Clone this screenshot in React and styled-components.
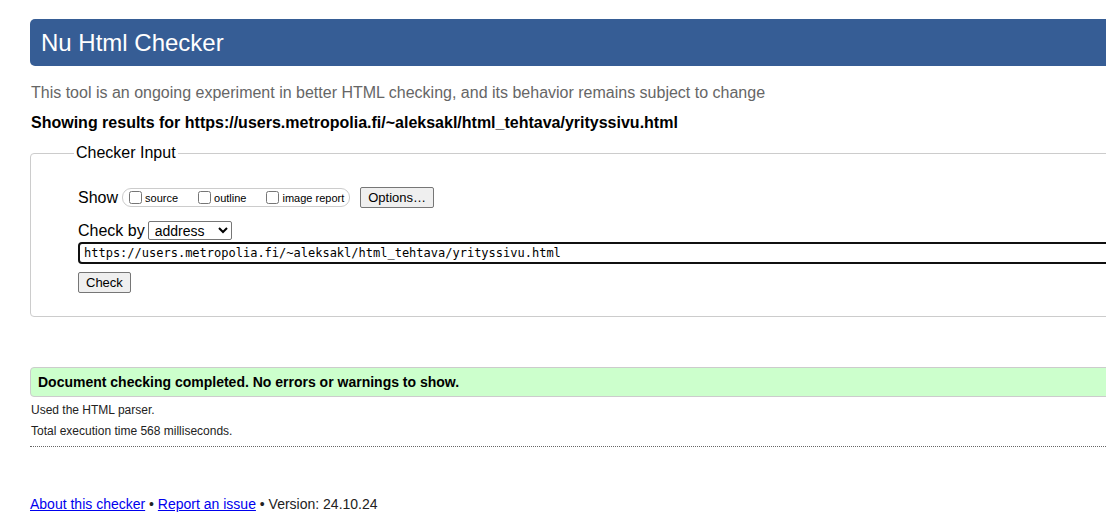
import styled, { createGlobalStyle } from 'styled-components';

const GlobalStyle = createGlobalStyle`
  html, body {
    margin: 0;
    padding: 0;
    overflow: hidden;
    background: #fff;
  }
  body {
    font-family: "Liberation Sans", Arial, sans-serif;
    color: #000;
  }
`;

const Page = styled.div`
  width: 1180px;
  padding: 19px 0 0 30px;
  display: flex;
  flex-direction: column;
`;

const Header = styled.h1`
  margin: 0;
  height: 47px;
  padding-left: 11px;
  background: #365d95;
  border-radius: 5px;
  color: #fff;
  font-size: 24px;
  font-weight: normal;
  line-height: 47px;
`;

const Intro = styled.p`
  margin: 18px 0 0 1px;
  font-size: 16px;
  line-height: 18px;
  color: #666;
`;

const ResultsFor = styled.p`
  margin: 12px 0 0 1px;
  font-size: 16px;
  line-height: 18px;
  font-weight: bold;
`;

const Fieldset = styled.fieldset`
  margin: 12px 0 0;
  padding: 0;
  border: 1px solid #ccc;
  border-radius: 4px;
  min-width: 0;
`;

const Legend = styled.legend`
  margin-left: 43px;
  padding: 0 2px;
  font-size: 16px;
  line-height: 18px;
`;

const FieldBody = styled.div`
  padding: 25px 30px 23px 47px;
  display: flex;
  flex-direction: column;
  align-items: flex-start;
`;

const Row = styled.div`
  display: flex;
  align-items: center;
  margin-top: ${(p) => p.$top || 0}px;
`;

const RowLabel = styled.span`
  font-size: 16px;
  line-height: 18px;
  margin-right: ${(p) => p.$gap || 4}px;
`;

const Pill = styled.span`
  display: inline-block;
  height: 17px;
  padding: 0 5px 0 2px;
  border: 1px solid #ccc;
  border-radius: 9px;
  font-size: 11px;
  line-height: 18px;
  white-space: nowrap;
`;

const CheckItem = styled.label`
  margin-right: ${(p) => (p.$last ? 0 : 16)}px;

  input {
    width: 13px;
    height: 13px;
    margin: 0 3px 0 4px;
    vertical-align: -2px;
  }
`;

const Button = styled.button`
  height: 21px;
  padding: 0 7px;
  margin-left: ${(p) => p.$left || 0}px;
  margin-top: ${(p) => p.$top || 0}px;
  font-family: "Liberation Sans", Arial, sans-serif;
  font-size: 13px;
  background: #efefef;
  border: 1px solid #767676;
  border-radius: 2px;
  color: #000;
`;

const Select = styled.select`
  width: 84px;
  height: 19px;
  padding: 0 0 0 2px;
  font-family: "Liberation Sans", Arial, sans-serif;
  font-size: 14px;
  border: 1px solid #767676;
  border-radius: 2px;
  background: #fff;
  color: #000;
`;

const UrlInput = styled.input`
  box-sizing: border-box;
  width: 100%;
  height: 22px;
  margin-top: 2px;
  padding: 0 4px;
  border: 2px solid #101010;
  border-radius: 4px;
  font-family: "DejaVu Sans Mono", "Liberation Mono", monospace;
  font-size: 12px;
  color: #000;
  outline: none;
`;

const Success = styled.div`
  margin-top: 50px;
  height: 28px;
  padding-left: 7px;
  background: #ccffcc;
  border: 1px solid #ccc;
  border-radius: 4px;
  font-size: 14px;
  font-weight: bold;
  line-height: 28px;
`;

const Note = styled.p`
  margin: ${(p) => p.$top}px 0 0 1px;
  font-size: 12px;
  line-height: 14px;
  color: #222;
`;

const Divider = styled.hr`
  margin: 8px 0 0;
  border: none;
  border-top: 1px dotted #666;
  height: 0;
`;

const Footer = styled.p`
  margin: 49px 0 0;
  font-size: 14px;
  line-height: 16px;
  color: #222;

  a {
    color: #0000ee;
    text-decoration: underline;
  }
`;

export default function App() {
  return (
    <>
      <GlobalStyle />
      <Page>
        <Header>Nu Html Checker</Header>
        <Intro>
          This tool is an ongoing experiment in better HTML checking, and its behavior remains subject to change
        </Intro>
        <ResultsFor>
          Showing results for https://users.metropolia.fi/~aleksakl/html_tehtava/yrityssivu.html
        </ResultsFor>
        <Fieldset>
          <Legend>Checker Input</Legend>
          <FieldBody>
            <Row>
              <RowLabel $gap={4}>Show</RowLabel>
              <Pill>
                <CheckItem>
                  <input type="checkbox" />source
                </CheckItem>
                <CheckItem>
                  <input type="checkbox" />outline
                </CheckItem>
                <CheckItem $last>
                  <input type="checkbox" />image report
                </CheckItem>
              </Pill>
              <Button $left={10}>Options…</Button>
            </Row>
            <Row $top={13}>
              <RowLabel $gap={3}>Check by</RowLabel>
              <Select defaultValue="address">
                <option value="address">address</option>
                <option value="file">file upload</option>
                <option value="text">text input</option>
              </Select>
            </Row>
            <UrlInput
              type="url"
              defaultValue="https://users.metropolia.fi/~aleksakl/html_tehtava/yrityssivu.html"
            />
            <Button $top={8}>Check</Button>
          </FieldBody>
        </Fieldset>
        <Success>Document checking completed. No errors or warnings to show.</Success>
        <Note $top={6}>Used the HTML parser.</Note>
        <Note $top={7}>Total execution time 568 milliseconds.</Note>
        <Divider />
        <Footer>
          <a href="#about">About this checker</a> • <a href="#issue">Report an issue</a> • Version: 24.10.24
        </Footer>
      </Page>
    </>
  );
}
